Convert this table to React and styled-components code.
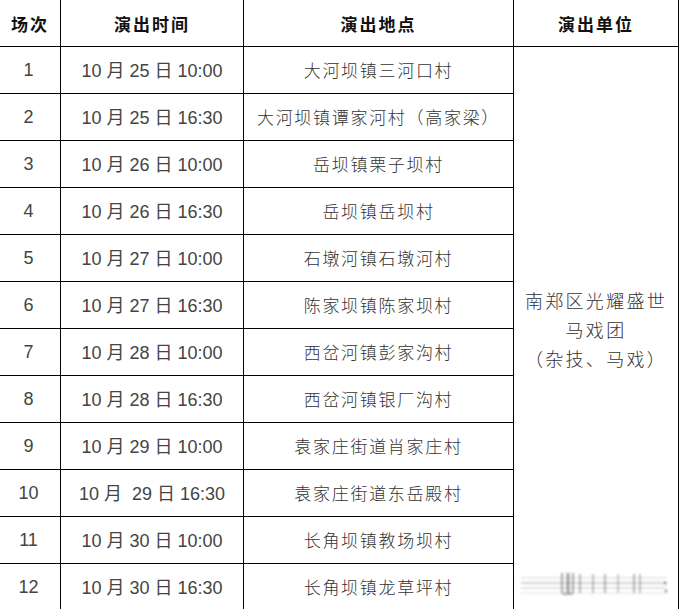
import styled, { createGlobalStyle } from "styled-components";

const GlobalStyle = createGlobalStyle`
  html, body {
    margin: 0;
    padding: 0;
    background: #ffffff;
  }
  body {
    font-family: "Liberation Sans", "Noto Sans CJK SC", sans-serif;
    overflow: hidden;
  }
`;

const shows = [
  { no: "1", time: "10 月 25 日 10:00", place: "大河坝镇三河口村" },
  { no: "2", time: "10 月 25 日 16:30", place: "大河坝镇谭家河村（高家梁）" },
  { no: "3", time: "10 月 26 日 10:00", place: "岳坝镇栗子坝村" },
  { no: "4", time: "10 月 26 日 16:30", place: "岳坝镇岳坝村" },
  { no: "5", time: "10 月 27 日 10:00", place: "石墩河镇石墩河村" },
  { no: "6", time: "10 月 27 日 16:30", place: "陈家坝镇陈家坝村" },
  { no: "7", time: "10 月 28 日 10:00", place: "西岔河镇彭家沟村" },
  { no: "8", time: "10 月 28 日 16:30", place: "西岔河镇银厂沟村" },
  { no: "9", time: "10 月 29 日 10:00", place: "袁家庄街道肖家庄村" },
  { no: "10", time: "10 月\u00a0\u00a029 日 16:30", place: "袁家庄街道东岳殿村" },
  { no: "11", time: "10 月 30 日 10:00", place: "长角坝镇教场坝村" },
  { no: "12", time: "10 月 30 日 16:30", place: "长角坝镇龙草坪村" },
];

export default function App() {
  return (
    <Page>
      <GlobalStyle />
      <Grid>
        <HeadCell>场次</HeadCell>
        <HeadCell>演出时间</HeadCell>
        <HeadCell>演出地点</HeadCell>
        <HeadCell>演出单位</HeadCell>
        {shows.map((s, i) => (
          <Row key={s.no} $last={i === shows.length - 1}>
            <NumCell>{s.no}</NumCell>
            <TimeCell>{s.time}</TimeCell>
            <PlaceCell>{s.place}</PlaceCell>
          </Row>
        ))}
        <UnitCell>
          <span>南郑区光耀盛世</span>
          <span>马戏团</span>
          <span>（杂技、马戏）</span>
        </UnitCell>
      </Grid>
      <Watermark viewBox="0 0 150 26" aria-hidden="true">
        <g stroke="#9a9a9a" fill="none" opacity="0.55">
          <line x1="2" y1="7" x2="148" y2="7" strokeWidth="2" opacity="0.4" />
          <line x1="2" y1="12" x2="148" y2="12" strokeWidth="2" opacity="0.8" />
          <line x1="2" y1="17" x2="148" y2="17" strokeWidth="2" opacity="0.5" />
          <line x1="2" y1="22" x2="148" y2="22" strokeWidth="2" opacity="0.3" />
        </g>
        <g stroke="#777" fill="none">
          <path d="M43 2 V20 Q43 23 46 23 H51 Q54 23 54 20 V2" strokeWidth="2" opacity="0.6" />
          <line x1="49" y1="2" x2="49" y2="22" strokeWidth="3" opacity="0.7" />
          <line x1="61" y1="3" x2="61" y2="22" strokeWidth="2" opacity="0.5" />
          <line x1="74" y1="3" x2="74" y2="22" strokeWidth="2" opacity="0.45" />
          <line x1="86" y1="3" x2="86" y2="22" strokeWidth="2" opacity="0.5" />
          <line x1="99" y1="3" x2="99" y2="22" strokeWidth="2" opacity="0.35" />
          <line x1="115" y1="3" x2="115" y2="22" strokeWidth="2" opacity="0.5" />
          <line x1="121" y1="3" x2="121" y2="22" strokeWidth="2" opacity="0.45" />
        </g>
        <circle cx="146" cy="12" r="1.2" fill="#444" opacity="0.7" />
        <circle cx="147" cy="20" r="1.2" fill="#444" opacity="0.7" />
      </Watermark>
    </Page>
  );
}

const Page = styled.div`
  position: relative;
  width: 679px;
  height: 609px;
  overflow: hidden;
  background: #fff;
`;

const Grid = styled.div`
  display: grid;
  grid-template-columns: 61px 183px 270px 165px;
  grid-template-rows: repeat(13, 47px);
  width: 679px;
`;

const Cell = styled.div`
  box-sizing: border-box;
  display: flex;
  align-items: center;
  justify-content: center;
  border-right: 1px solid #000;
  border-bottom: 1px solid #000;
  white-space: nowrap;
`;

const HeadCell = styled(Cell)`
  color: #111;
  font-family: "Noto Sans CJK SC", sans-serif;
  font-weight: 700;
  font-size: 17px;
  letter-spacing: 2px;
`;

const Row = styled.div`
  display: contents;
  & > div {
    border-bottom: ${(p) => (p.$last ? "none" : "1px solid #000")};
  }
`;

const NumCell = styled(Cell)`
  grid-column: 1;
  padding-right: 3px;
  color: #444;
  font-size: 18px;
`;

const TimeCell = styled(Cell)`
  grid-column: 2;
  padding-bottom: 3px;
  color: #444;
  font-size: 18px;
  font-weight: 400;
`;

const PlaceCell = styled(Cell)`
  grid-column: 3;
  padding-bottom: 2px;
  color: #333;
  font-family: "Noto Sans CJK SC", sans-serif;
  font-weight: 300;
  font-size: 17px;
  letter-spacing: 1.7px;
`;

const UnitCell = styled(Cell)`
  grid-column: 4;
  grid-row: 2 / span 12;
  flex-direction: column;
  border-bottom: none;
  color: #333;
  font-family: "Noto Sans CJK SC", sans-serif;
  font-weight: 300;
  font-size: 18px;
  letter-spacing: 2.3px;
  line-height: 29px;
`;

const Watermark = styled.svg`
  position: absolute;
  left: 519px;
  top: 571px;
  width: 150px;
  height: 26px;
  filter: blur(0.8px);
`;
